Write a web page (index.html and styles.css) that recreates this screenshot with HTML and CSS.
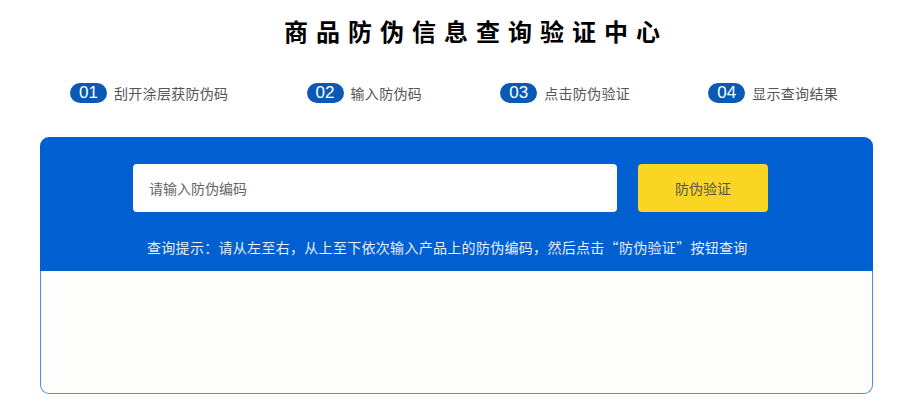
FILE: index.html
```
<!DOCTYPE html>
<html lang="zh-CN">

<head>
  <meta charset="UTF-8">
  <meta name="viewport" content="width=device-width, initial-scale=1.0">
  <title>商品防伪信息查询验证中心</title>
  <link rel="stylesheet" href="styles.css">
</head>

<body>
  <div class="main">
    <h1 class="title">商品防伪信息查询验证中心</h1>

    <div class="steps">
      <div class="step"><span class="num">01</span>刮开涂层获防伪码</div>
      <div class="step"><span class="num">02</span>输入防伪码</div>
      <div class="step"><span class="num">03</span>点击防伪验证</div>
      <div class="step"><span class="num">04</span>显示查询结果</div>
    </div>

    <div class="box">
      <div class="search">
        <div class="form">
          <input class="code" type="text" placeholder="请输入防伪编码">
          <button class="btn">防伪验证</button>
        </div>
        <p class="tip">查询提示：请从左至右，从上至下依次输入产品上的防伪编码，然后点击“防伪验证”按钮查询</p>
      </div>
      <div class="result"></div>
    </div>
  </div>
</body>

</html>
```

FILE: styles.css
```
* {
  box-sizing: border-box;
}

body {
  margin: 0;
  background: #fff;
  font-family: "Microsoft YaHei", "Noto Sans CJK SC", sans-serif;
}

.main {
  width: 904px;
  height: 419px;
  overflow: hidden;
}

.title {
  margin: 0;
  padding: 15px 0 0 48px;
  height: 74px;
  font-size: 24px;
  line-height: 32px;
  font-weight: bold;
  letter-spacing: 8px;
  text-align: center;
  color: #000;
}

.steps {
  display: flex;
  justify-content: space-between;
  align-items: center;
  margin: 0 66px 0 70px;
  height: 38px;
}

.step {
  display: flex;
  align-items: center;
  font-size: 14px;
  letter-spacing: 0.3px;
  color: #555;
}

.num {
  display: inline-block;
  width: 37px;
  height: 20px;
  line-height: 20px;
  margin-right: 7px;
  border-radius: 10px;
  background: #0a5ab4;
  color: #fff;
  font-family: "Liberation Sans", Arial, sans-serif;
  font-size: 17px;
  letter-spacing: 0;
  text-align: center;
}

.box {
  margin: 25px 31px 0 40px;
}

.search {
  height: 134px;
  padding: 27px 0 0 93px;
  background: #0060d2;
  border-radius: 9px 9px 0 0;
}

.form {
  display: flex;
  gap: 21px;
}

.code {
  width: 484px;
  height: 48px;
  padding: 0 16px;
  border: none;
  border-radius: 4px;
  background: #fff;
  font-family: inherit;
  font-size: 14px;
  color: #333;
  outline: none;
}

.code::placeholder {
  color: #666;
}

.btn {
  width: 130px;
  height: 48px;
  border: none;
  border-radius: 4px;
  background: #f8d623;
  font-family: inherit;
  font-size: 14px;
  color: #555;
}

.tip {
  margin: 23px 0 0 14px;
  font-size: 14px;
  line-height: 24px;
  letter-spacing: 0.3px;
  color: #e6eefa;
}

.result {
  height: 123px;
  background: #fdfdfc;
  border: 1px solid #4a8ee0;
  border-top: none;
  border-radius: 0 0 9px 9px;
}
```
